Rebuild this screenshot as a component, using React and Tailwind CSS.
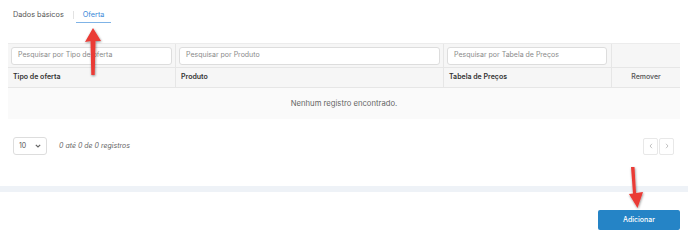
import React from "react";

export default function App() {
  return (
    <div className="relative w-[688px] h-[242px] bg-white overflow-hidden text-[7px] text-[#555]" style={{ fontFamily: "Inter, 'Noto Sans', sans-serif" }}>
      {/* Tabs */}
      <div className="flex items-end h-[23px] pl-[13px]">
        <div className="pb-[4px] leading-[8px] text-[#555] text-[7.3px]">Dados básicos</div>
        <div className="w-px h-[8px] bg-[#e2e2e2] ml-[9px] mb-[4px]" />
        <div className="ml-[2px] px-[7px] pb-[3px] leading-[8px] text-[#3b8ad9] text-[7.3px] border-b border-[#7fb3e6]">Oferta</div>
      </div>

      {/* Table */}
      <div className="mt-[20px] mx-[8px] w-[672px]">
        <div className="flex h-[24px] bg-[#f6f6f6] border-t border-[#ececec]">
          <div className="w-[168px] flex items-center px-[3px] border-r border-[#e6e6e6]">
            <div className="w-full h-[18px] bg-white border border-[#ddd] rounded-[3px] flex items-center px-[6px] text-[#8a8a8a]">Pesquisar por Tipo de oferta</div>
          </div>
          <div className="w-[268px] flex items-center px-[3px] border-r border-[#e6e6e6]">
            <div className="w-full h-[18px] bg-white border border-[#ddd] rounded-[3px] flex items-center px-[6px] text-[#8a8a8a]">Pesquisar por Produto</div>
          </div>
          <div className="w-[168px] flex items-center pl-[3px] pr-[4px] border-r border-[#e6e6e6]">
            <div className="w-full h-[18px] bg-white border border-[#ddd] rounded-[3px] flex items-center px-[6px] text-[#8a8a8a]">Pesquisar por Tabela de Preços</div>
          </div>
          <div className="flex-1" />
        </div>
        <div className="flex h-[21px] bg-[#f6f6f6] border-t border-b border-[#e6e6e6] text-[#333] font-semibold">
          <div className="w-[168px] flex items-center px-[5px] border-r border-[#e6e6e6]">Tipo de oferta</div>
          <div className="w-[268px] flex items-center px-[5px] border-r border-[#e6e6e6]">Produto</div>
          <div className="w-[168px] flex items-center px-[5px] border-r border-[#e6e6e6]">Tabela de Preços</div>
          <div className="flex-1 flex items-center justify-center font-medium text-[#555]">Remover</div>
        </div>
        <div className="h-[31px] bg-[#fafafa] flex items-center justify-center text-[#666] text-[7.7px]">Nenhum registro encontrado.</div>
      </div>

      {/* Pagination */}
      <div className="flex items-center justify-between mt-[18px] ml-[13px] mr-[14px]">
        <div className="flex items-center">
          <div className="w-[34px] h-[18px] border border-[#ddd] rounded-[3px] flex items-center justify-between px-[5px] text-[#555]">
            <span>10</span>
            <svg width="6" height="4" viewBox="0 0 6 4"><path d="M0.8 0.8 L3 3 L5.2 0.8" fill="none" stroke="#666" strokeWidth="1.2" /></svg>
          </div>
          <div className="ml-[12px] italic text-[#666]">0 até 0 de 0 registros</div>
        </div>
        <div className="flex gap-[1px]">
          <div className="w-[15px] h-[17px] border border-[#e8e8e8] rounded-[2px] flex items-center justify-center">
            <svg width="4" height="6" viewBox="0 0 4 6"><path d="M3 0.8 L1 3 L3 5.2" fill="none" stroke="#bbb" strokeWidth="0.9" /></svg>
          </div>
          <div className="w-[15px] h-[17px] border border-[#e8e8e8] rounded-[2px] flex items-center justify-center">
            <svg width="4" height="6" viewBox="0 0 4 6"><path d="M1 0.8 L3 3 L1 5.2" fill="none" stroke="#bbb" strokeWidth="0.9" /></svg>
          </div>
        </div>
      </div>

      {/* Band */}
      <div className="mt-[31px] h-[6px] bg-[#eef2f7]" />

      {/* Footer */}
      <div className="flex justify-end mt-[18px] mr-[8px]">
        <div className="w-[82px] h-[20px] bg-[#2584c6] rounded-[2px] flex items-center justify-center text-white font-medium text-[7px]">Adicionar</div>
      </div>

      {/* Red arrows overlay */}
      <svg className="absolute left-0 top-0 pointer-events-none" width="688" height="242">
        <defs>
          <filter id="sh" x="-50%" y="-50%" width="200%" height="200%">
            <feDropShadow dx="0.5" dy="1" stdDeviation="1" floodColor="#000" floodOpacity="0.45" />
          </filter>
        </defs>
        <g filter="url(#sh)" fill="#ea3a35">
          <path d="M91.3 75 L90.5 41 L85 42 L93 28 L101 41 L95.5 41 L94.7 75 Z" />
          <path d="M631 167 L634.5 167 L636 193 L643 192 L637.5 208 L629 194 L633 193.5 Z" />
        </g>
      </svg>
    </div>
  );
}
